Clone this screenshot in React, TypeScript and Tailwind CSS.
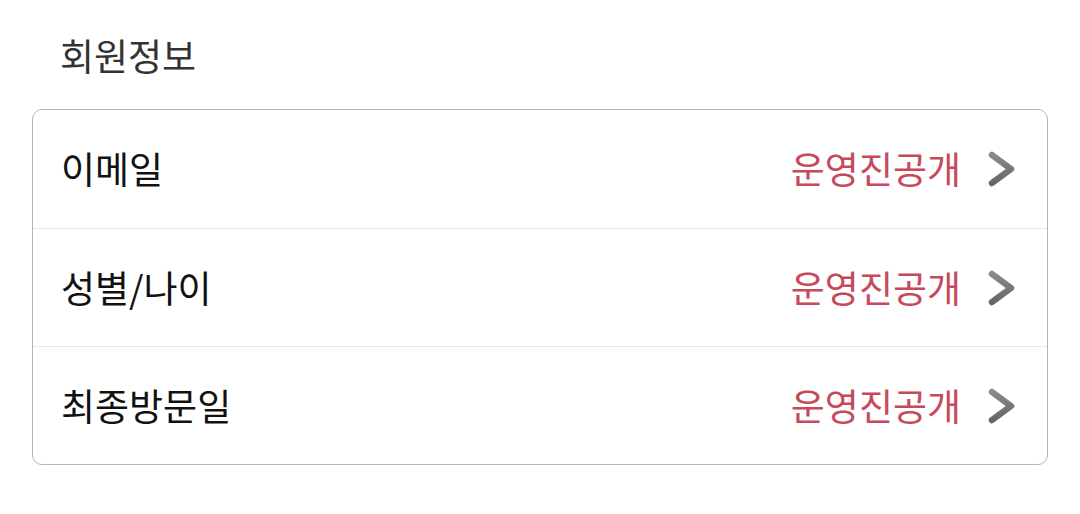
import React from "react";

const rows = ["이메일", "성별/나이", "최종방문일"];

function Chevron() {
  return (
    <svg width="30" height="38" viewBox="0 0 30 38" className="shrink-0">
      <defs>
        <linearGradient id="chev" x1="0" y1="0" x2="0" y2="1">
          <stop offset="0" stopColor="#8a8a8a" />
          <stop offset="1" stopColor="#666" />
        </linearGradient>
      </defs>
      <path d="M5 5 L24 19 L5 33" fill="none" stroke="url(#chev)" strokeWidth="6.5" strokeLinecap="round" strokeLinejoin="round" />
    </svg>
  );
}

export default function App() {
  return (
    <main
      className="w-[1080px] h-[514px] bg-white px-8 pt-[30px]"
      style={{ fontFamily: '"Noto Sans CJK KR", "Noto Sans", sans-serif' }}
    >
      <h2 className="pl-7 text-[37px] leading-[50px] text-[#333] h-[79px]">회원정보</h2>
      <div className="border border-[#b5b5b5] rounded-[10px] overflow-hidden">
        {rows.map((label, i) => (
          <div
            key={label}
            className={`flex items-center h-[118px] pl-7 pr-[30px] ${i > 0 ? "border-t border-[#e8e8e8]" : ""}`}
          >
            <span className="flex-1 text-[37px] text-[#111]">{label}</span>
            <span className="text-[37px] text-[#c64a5b] mr-[26px]">운영진공개</span>
            <Chevron />
          </div>
        ))}
      </div>
    </main>
  );
}
